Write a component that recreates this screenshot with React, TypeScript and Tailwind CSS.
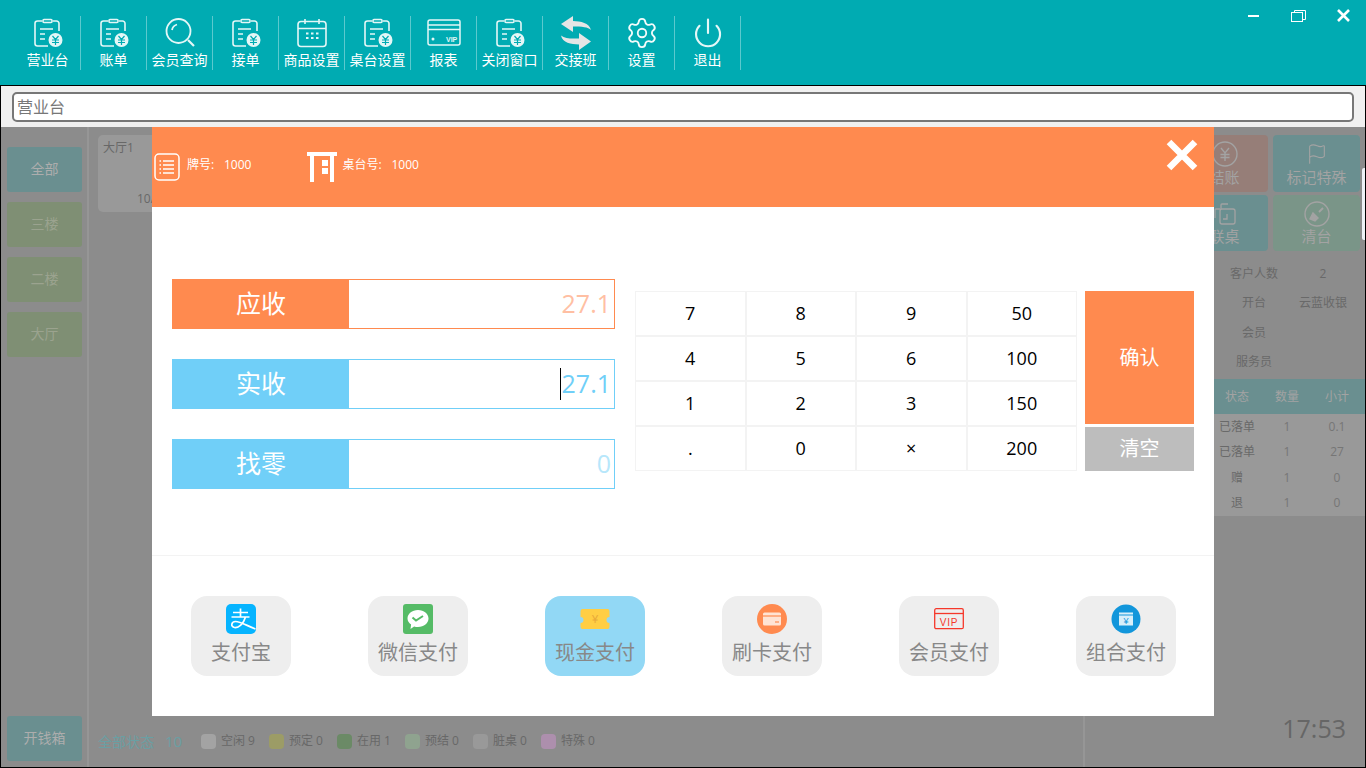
import { Flag, Power, Settings } from "lucide-react";

const toolbar = [
  { label: "营业台", icon: "receipt" },
  { label: "账单", icon: "receipt" },
  { label: "会员查询", icon: "search" },
  { label: "接单", icon: "receipt" },
  { label: "商品设置", icon: "calendar" },
  { label: "桌台设置", icon: "receipt" },
  { label: "报表", icon: "card" },
  { label: "关闭窗口", icon: "receipt" },
  { label: "交接班", icon: "swap" },
  { label: "设置", icon: "gear" },
  { label: "退出", icon: "power" },
];

const keys = ["7", "8", "9", "50", "4", "5", "6", "100", "1", "2", "3", "150", ".", "0", "×", "200"];

const legend = [
  { label: "空闲 9", color: "bg-[#a3a3a3]" },
  { label: "预定 0", color: "bg-[#9c9c66]" },
  { label: "在用 1", color: "bg-[#6b8a66]" },
  { label: "预结 0", color: "bg-[#8fa38f]" },
  { label: "脏桌 0", color: "bg-[#999999]" },
  { label: "特殊 0", color: "bg-[#ad8fad]" },
];

const orders = [
  ["已落单", "1", "0.1"],
  ["已落单", "1", "27"],
  ["赠", "1", "0"],
  ["退", "1", "0"],
];

function ReceiptIcon() {
  return (
    <svg viewBox="0 0 30 30" className="h-[30px] w-[30px]" fill="none" stroke="#e4f7f7" strokeWidth="1.6">
      <path d="M9 3H4.500A2.500 2.500 0 0 0 2 5.500v20A2.500 2.500 0 0 0 4.500 28H15" />
      <path d="M20 3h3.500A2.500 2.500 0 0 1 26 5.500V13" />
      <rect x="10" y="1.500" width="9" height="3" rx="1" />
      <path d="M7 11h13M7 16h5M7 21h5" />
      <circle cx="22.500" cy="22" r="7" fill="#e4f7f7" stroke="none" />
      <path d="M19.500 18l3 3.500 3-3.500M19 22h7M19 24.500h7M22.500 21.500V27" stroke="#00abb2" strokeWidth="1.200" />
    </svg>
  );
}

function ToolIcon({ name }: { name: string }) {
  if (name === "receipt") return <ReceiptIcon />;
  if (name === "search")
    return (
      <svg viewBox="0 0 30 30" className="h-[30px] w-[30px]" fill="none" stroke="#e4f7f7" strokeWidth="1.800">
        <circle cx="13.500" cy="13" r="12" />
        <path d="M7 12a7 7 0 0 1 5-5.500" />
        <path d="M23 22l6 6" strokeWidth="2.200" />
      </svg>
    );
  if (name === "calendar")
    return (
      <svg viewBox="0 0 30 30" className="h-[30px] w-[30px]" fill="none" stroke="#e4f7f7" strokeWidth="1.600">
        <rect x="1" y="3.500" width="28" height="25" rx="3" />
        <path d="M1 10.500h28M8 1v5M22 1v5" />
        <path d="M9 15.500h2.500M14 15.500h2.500M19 15.500h2.500M9 20h2.500M14 20h2.500M19 20h2.500" strokeWidth="2" />
      </svg>
    );
  if (name === "card")
    return (
      <svg viewBox="0 0 34 28" className="h-[28px] w-[34px]" fill="none" stroke="#e4f7f7" strokeWidth="1.500">
        <rect x="1" y="1" width="32" height="25" rx="2" />
        <path d="M1 6h32M1 10.500h32" />
        <circle cx="6" cy="20" r="1.500" fill="#e4f7f7" stroke="none" />
        <text x="19" y="23" fontSize="7" fontWeight="700" fill="#e4f7f7" stroke="none" fontFamily="Liberation Sans">
          VIP
        </text>
      </svg>
    );
  if (name === "swap")
    return (
      <svg viewBox="0 0 32 34" className="h-[34px] w-[32px]" fill="#e5e5e5">
        <path d="M13 0v5c8 .5 16 1.500 18 9-3-3-9-3.500-18-3.500V16L1 8z" />
        <path d="M19 17v5.500c-8 0-14 .5-18-3 1.500 7.500 10 8.500 18 9V34l12-8.500z" />
      </svg>
    );
  if (name === "gear") return <Settings size={34} strokeWidth={1.300} color="#f2fbfb" />;
  return <Power size={32} strokeWidth={1.600} color="#e4f7f7" />;
}

function AmountRow({ label, value, border, fill, muted, caret }: { label: string; value: string; border: string; fill: string; muted: string; caret?: boolean }) {
  return (
    <div className={`flex h-[50px] border ${border}`}>
      <div className={`flex w-[176px] items-center justify-center text-[25px] text-white ${fill}`}>{label}</div>
      <div className={`flex flex-1 items-center justify-end bg-white pr-[3px] text-[25px] ${muted}`}>
        {caret && <span className="mr-[1px] h-[32px] w-[1px] bg-black" />}
        {value}
      </div>
    </div>
  );
}

function PayIcon({ name }: { name: string }) {
  if (name === "alipay")
    return (
      <svg viewBox="0 0 30 30" className="h-[30px] w-[30px]">
        <rect width="30" height="30" rx="5" fill="#06b4ff" />
        <path d="M7 8.500h15M14.500 4.500v8M5.500 13h18M19.500 13c-2 7-7 11-11 10.500-4-.5-3.500-6 1-6 5 0 11 4 20 7.500" fill="none" stroke="#fff" strokeWidth="1.700" />
      </svg>
    );
  if (name === "wechat")
    return (
      <svg viewBox="0 0 30 30" className="h-[30px] w-[30px]">
        <rect width="30" height="30" rx="3" fill="#55bb66" />
        <path d="M15 6c6 0 10.500 3.800 10.500 8.500S21 23 15 23c-1.400 0-2.700-.2-3.900-.6L7.500 25l.6-4.400C5.800 19 4.500 16.900 4.500 14.500 4.500 9.800 9 6 15 6z" fill="#fff" />
        <path d="M9.500 13.500l3.500 3 7-4.500" fill="none" stroke="#55bb66" strokeWidth="2" />
      </svg>
    );
  if (name === "cash")
    return (
      <svg viewBox="0 0 30 30" className="h-[30px] w-[30px]">
        <path d="M2.500 4h25a2 2 0 0 1 2 2v6a3 3 0 0 0 0 6v4a2 2 0 0 1-2 2h-25a2 2 0 0 1-2-2v-4a3 3 0 0 0 0-6V6a2 2 0 0 1 2-2z" transform="translate(0 1)" fill="#ffce44" />
        <text x="15" y="19" textAnchor="middle" fontSize="11" fill="#e8a93a" fontFamily="Liberation Sans">
          ¥
        </text>
      </svg>
    );
  if (name === "swipe")
    return (
      <svg viewBox="0 0 30 30" className="h-[30px] w-[30px]">
        <circle cx="15" cy="15" r="15" fill="#ff8a4f" />
        <rect x="6" y="8.500" width="18" height="13" rx="1.500" fill="#ffe3d3" />
        <path d="M6 12h18" stroke="#ff8a4f" strokeWidth="1.200" />
        <path d="M18 18h4" stroke="#ff8a4f" strokeWidth="1.200" />
      </svg>
    );
  if (name === "vip")
    return (
      <svg viewBox="0 0 30 30" className="h-[30px] w-[30px]" fill="none" stroke="#f5372a" strokeWidth="1.300">
        <rect x=".7" y="4.700" width="28.600" height="20" rx="1.500" />
        <path d="M.7 9.500h28.600" />
        <text x="15" y="21.500" textAnchor="middle" fontSize="10" letterSpacing=".8" fill="#f5372a" stroke="none" fontFamily="Liberation Sans">
          VIP
        </text>
      </svg>
    );
  return (
    <svg viewBox="0 0 30 30" className="h-[30px] w-[30px]">
      <circle cx="15" cy="15" r="14.500" fill="#1296db" />
      <rect x="8" y="8.500" width="14" height="13" fill="#d7effa" />
      <path d="M8 11h14" stroke="#1296db" strokeWidth="1" />
      <text x="15" y="20" textAnchor="middle" fontSize="9" fill="#1296db" fontFamily="Liberation Sans">
        ¥
      </text>
    </svg>
  );
}

const payments = [
  { label: "支付宝", icon: "alipay" },
  { label: "微信支付", icon: "wechat" },
  { label: "现金支付", icon: "cash", active: true },
  { label: "刷卡支付", icon: "swipe" },
  { label: "会员支付", icon: "vip" },
  { label: "组合支付", icon: "combo" },
];

function PayModal() {
  return (
    <div className="absolute left-[152px] top-[127px] flex h-[589px] w-[1062px] flex-col bg-white">
      {/* header */}
      <div className="flex h-[80px] items-center bg-[#ff8a4f] text-[12px] text-white">
        <svg viewBox="0 0 26 28" className="ml-[2px] h-[28px] w-[26px]" fill="none" stroke="#fff" strokeWidth="1.500">
          <rect x="1" y="1" width="24" height="26" rx="4" />
          <path d="M9 8h11M9 12h11M9 16h11M9 20h11" />
          <path d="M5.500 8h1.500M5.500 12h1.500M5.500 16h1.500M5.500 20h1.500" />
        </svg>
        <span className="mb-[4px] ml-[7px] w-[37px]">牌号:</span>
        <span className="mb-[4px]">1000</span>
        <svg viewBox="0 0 30 30" className="ml-[56px] h-[30px] w-[30px]" fill="#fff">
          <path d="M0 0h30v4H0zM3 4h4v26H3zM23 4h4v26h-4zM15 8h6v6h-6zM15 16h6v6h-6z" />
        </svg>
        <span className="mb-[4px] ml-[5px] w-[49px]">桌台号:</span>
        <span className="mb-[4px]">1000</span>
        <svg viewBox="0 0 32 32" className="mb-[24px] ml-auto mr-[16px] h-[32px] w-[32px]" stroke="#fff" strokeWidth="6.500">
          <path d="M3 3l26 26M29 3L3 29" />
        </svg>
      </div>

      {/* amounts and keypad */}
      <div className="flex h-[349px] border-b border-[#f3f3f3]">
        <div className="ml-[20px] mt-[72px] flex w-[443px] flex-col gap-[30px]">
          <AmountRow label="应收" value="27.1" border="border-[#ff8a4f]" fill="bg-[#ff8a4f]" muted="text-[#ffbfa3]" />
          <AmountRow label="实收" value="27.1" border="border-[#70cff8]" fill="bg-[#70cff8]" muted="text-[#70cff8]" caret />
          <AmountRow label="找零" value="0" border="border-[#70cff8]" fill="bg-[#70cff8]" muted="text-[#b7e7fb]" />
        </div>
        <div className="ml-[20px] mt-[84px] grid h-[180px] w-[442px] grid-cols-4 grid-rows-4">
          {keys.map((key) => (
            <div key={key} className="flex items-center justify-center border border-[#f3f3f3] text-[18px] text-black">
              {key}
            </div>
          ))}
        </div>
        <div className="ml-[8px] mt-[84px] flex h-[180px] w-[109px] flex-col gap-[3px] text-[20px] text-white">
          <div className="flex h-[133px] items-center justify-center bg-[#ff8a4f]">确认</div>
          <div className="flex flex-1 items-center justify-center bg-[#bdbdbd]">清空</div>
        </div>
      </div>

      {/* payment types */}
      <div className="flex justify-between pl-[39px] pr-[38px] pt-[40px]">
        {payments.map((pay) => (
          <div
            key={pay.label}
            className={`flex h-[80px] w-[100px] flex-col items-center rounded-[16px] pt-[8px] text-[20px] leading-[28px] text-[#888888] ${pay.active ? "bg-[#92d8f5]" : "bg-[#eeeeee]"}`}
          >
            <PayIcon name={pay.icon} />
            <span className="mt-[5px]">{pay.label}</span>
          </div>
        ))}
      </div>
    </div>
  );
}

export default function App() {
  return (
    <div className="relative flex h-[768px] w-[1366px] flex-col overflow-hidden font-['Open_Sans','Noto_Sans_CJK_SC',sans-serif]">
      {/* title bar */}
      <div className="flex h-[85px] shrink-0 bg-[#00abb2] pl-[15px]">
        {toolbar.map((item) => (
          <div key={item.label} className="relative mt-[16px] flex h-[54px] w-[66px] flex-col items-center border-r border-[#5cc9ce] text-[14px] leading-[16px] text-white">
            <div className="flex h-[34px] items-center justify-center">
              <ToolIcon name={item.icon} />
            </div>
            <span className="mt-[2px] whitespace-nowrap">{item.label}</span>
          </div>
        ))}
        <div className="ml-auto mt-[9px] flex h-[13px] items-center pr-[16px]">
          <span className="h-[2px] w-[11px] bg-white" />
          <svg viewBox="0 0 15 12" className="ml-[32px] h-[12px] w-[15px]" fill="none" stroke="#fff">
            <rect x=".5" y="2.500" width="11" height="9" />
            <path d="M3.500 2.500v-2h11v9h-3" />
          </svg>
          <svg viewBox="0 0 13 13" className="ml-[31px] h-[13px] w-[13px]" stroke="#fff" strokeWidth="2.600">
            <path d="M1 1l11 11M12 1L1 12" />
          </svg>
        </div>
      </div>

      <div className="flex min-h-0 flex-1 flex-col border border-black">
        {/* address row */}
        <div className="h-[41px] shrink-0 bg-[#f0f0f0] pl-[11px] pr-[11px] pt-[6px]">
          <div className="flex h-[30px] items-center rounded-[5px] border-2 border-[#777777] bg-white pl-[3px] text-[16px] text-[#777777]">
            营业台
          </div>
        </div>

        {/* dimmed workspace */}
        <div className="flex min-h-0 flex-1 bg-[#8c8c8c]">
          <div className="flex w-[88px] shrink-0 flex-col gap-[10px] border-r-2 border-[#969696] pb-[6px] pl-[6px] pt-[20px] text-[14px]">
            <div className="flex h-[45px] w-[75px] items-center justify-center rounded-[3px] bg-[#6a8f90] pb-[2px] text-[#adadad]">全部</div>
            <div className="flex h-[45px] w-[75px] items-center justify-center rounded-[3px] bg-[#7f8f74] pb-[2px] text-[#9ba38f]">三楼</div>
            <div className="flex h-[45px] w-[75px] items-center justify-center rounded-[3px] bg-[#7f8f74] pb-[2px] text-[#9ba38f]">二楼</div>
            <div className="flex h-[45px] w-[75px] items-center justify-center rounded-[3px] bg-[#7f8f74] pb-[2px] text-[#9ba38f]">大厅</div>
            <div className="mt-auto flex h-[45px] w-[75px] items-center justify-center rounded-[3px] bg-[#6a8f90] pb-[2px] text-[#adadad]">开钱箱</div>
          </div>

          <div className="flex min-w-0 flex-1 flex-col pl-[9px] pt-[8px]">
            <div className="flex h-[77px] w-[90px] flex-col justify-between rounded-[5px] bg-[#999999] px-[5px] pb-[4px] pt-[4px] text-[12px] text-[#686868]">
              <span>大厅1</span>
              <span className="ml-[34px]">10/12</span>
            </div>
            <div className="mt-auto flex h-[52px] items-center text-[12px] text-[#686868]">
              <span className="w-[67px] text-[14px] text-[#6a9fa3]">全部状态</span>
              <span className="w-[36px] text-[15px] text-[#6a9fa3]">10</span>
              {legend.map((item) => (
                <div key={item.label} className="flex w-[68px] items-center gap-[5px]">
                  <span className={`h-[15px] w-[15px] rounded-[4px] ${item.color}`} />
                  <span>{item.label}</span>
                </div>
              ))}
            </div>
          </div>

          {/* order panel */}
          <div className="flex w-[282px] shrink-0 flex-col border-l-2 border-[#969696] pt-[8px] text-[12px] text-[#696969]">
            <div className="ml-[96px] grid w-[179px] grid-cols-2 gap-x-[5px] gap-y-[3px] text-[15px] leading-[20px] text-[#a3a3a3]">
              <div className="flex h-[57px] flex-col items-center rounded-[4px] bg-[#967e78] pt-[6px]">
                <svg viewBox="0 0 26 26" className="h-[26px] w-[26px]" fill="none" stroke="#a3a3a3" strokeWidth="1.400">
                  <circle cx="13" cy="13" r="12" />
                  <path d="M9 7l4 5 4-5M8.500 13.500h9M8.500 16.500h9M13 12v8" />
                </svg>
                <span>结账</span>
              </div>
              <div className="flex h-[57px] flex-col items-center rounded-[4px] bg-[#6a8f90] pt-[8px]">
                <Flag size={22} strokeWidth={1.200} />
                <span className="mt-[2px]">标记特殊</span>
              </div>
              <div className="flex h-[56px] flex-col items-center rounded-[4px] bg-[#6a8f90] pt-[8px]">
                <svg viewBox="0 0 22 22" className="h-[22px] w-[22px]" fill="none" stroke="#a3a3a3" strokeWidth="1.300">
                  <path d="M7 6V2a1 1 0 0 1 1-1h6" />
                  <rect x="6" y="6" width="15" height="15" rx="2" />
                  <path d="M1 15V7a1 1 0 0 1 1-1h4M13 11v5H9" />
                </svg>
                <span className="mt-[1px]">联桌</span>
              </div>
              <div className="flex h-[56px] flex-col items-center rounded-[4px] bg-[#7a9588] pt-[6px]">
                <svg viewBox="0 0 26 26" className="h-[26px] w-[26px]" fill="none" stroke="#a3a3a3" strokeWidth="1.400">
                  <circle cx="13" cy="13" r="12" />
                  <path d="M19 7l-4 4" strokeWidth="2" />
                  <path d="M9 12l5 5-3 3-5-2z" fill="#a3a3a3" />
                </svg>
                <span className="mt-[-1px]">清台</span>
              </div>
            </div>
            <div className="mt-[8px] pl-[129px]">
              {[
                ["客户人数", "2"],
                ["开台", "云蓝收银"],
                ["会员", ""],
                ["服务员", ""],
              ].map(([name, value]) => (
                <div key={name} className="flex h-[29.500px] items-center">
                  <span className="w-[80px] text-center">{name}</span>
                  <span className="w-[58px] text-center">{value}</span>
                </div>
              ))}
            </div>
            <div className="mt-[2px] flex h-[35px] items-center bg-[#6a8f90] pl-[127px] text-[#a3a3a3]">
              <span className="w-[50px] text-center">状态</span>
              <span className="w-[50px] text-center">数量</span>
              <span className="w-[50px] text-center">小计</span>
            </div>
            <div className="bg-[#999999] pl-[127px]">
              {orders.map(([state, count, total], i) => (
                <div key={i} className="flex h-[25.500px] items-center">
                  <span className="w-[50px] text-center">{state}</span>
                  <span className="w-[50px] text-center text-[#767676]">{count}</span>
                  <span className="w-[50px] text-center text-[#767676]">{total}</span>
                </div>
              ))}
            </div>
            <div className="mt-auto pb-[21px] pr-[19px] text-right text-[25px] leading-[36px] text-[#666666]">17:53</div>
          </div>
        </div>
      </div>

      {/* panel scroll tab */}
      <div className="absolute left-[1362px] top-[168px] h-[72px] w-[3px] rounded-l-[2px] bg-[#eef1f5]" />
      <PayModal />
    </div>
  );
}
